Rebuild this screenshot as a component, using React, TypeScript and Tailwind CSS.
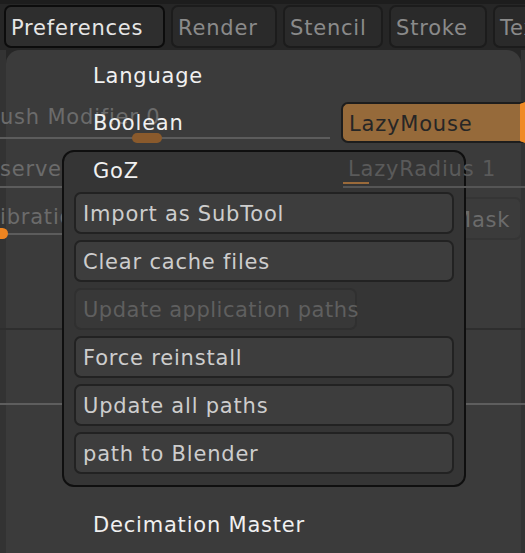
import React from 'react';

const tabs = [
  { label: 'Preferences', w: 'w-[161px]', active: true },
  { label: 'Render', w: 'w-[106px]' },
  { label: 'Stencil', w: 'w-[100px]' },
  { label: 'Stroke', w: 'w-[98px]' },
  { label: 'Texture', w: 'w-[110px]' },
];

const gozItems = [
  { label: 'Import as SubTool' },
  { label: 'Clear cache files' },
  { label: 'Update application paths', disabled: true },
  { label: 'Force reinstall' },
  { label: 'Update all paths' },
  { label: 'path to Blender' },
];

export default function App() {
  return (
    <div className="w-[525px] h-[553px] overflow-hidden bg-[#262626] font-['DejaVu_Sans',sans-serif] text-[21px] leading-[24px] tracking-[0.8px] select-none">
      {/* Tab bar */}
      <div className="h-[50px] flex gap-[6px] pl-[4px] pt-[1px] border-t-[4px] border-[#1d1d1d]">
        {tabs.map((t) => (
          <div
            key={t.label}
            className={
              t.active
                ? `${t.w} shrink-0 h-[43px] rounded-[7px] border-2 border-[#0c0c0c] bg-[#2e2e2e] text-[#e6e6e6] px-[5px] pt-[3px] flex items-center overflow-hidden`
                : `${t.w} shrink-0 h-[43px] rounded-[7px] border-2 border-[#1c1c1c] bg-[#2a2a2a] text-[#8a8a8a] px-[5px] pt-[3px] flex items-center overflow-hidden`
            }
          >
            {t.label}
          </div>
        ))}
      </div>

      {/* Main area */}
      <div className="relative h-[503px] flex">
        <div className="w-[6px] bg-[#333333]" />
        <div className="flex-1 bg-[#3b3b3b] rounded-t-[14px]" />
        <div className="w-[4px] bg-[#333333]" />

        {/* Faded palette underneath */}
        <div className="absolute inset-0 flex flex-col text-[#6b6b6b] whitespace-nowrap">
          {/* Brush Modifier / LazyMouse */}
          <div className="mt-[52px] h-[41px] flex">
            <div className="relative w-[330px]">
              <div className="h-[37px] pt-[3px] border-b-2 border-[#5c5c5c]">ush Modifier 0</div>
              <div className="absolute left-[132px] top-[31px] w-[30px] h-[10px] rounded-full bg-[#8a5a2c]" />
            </div>
            <div className="ml-[11px] flex-1 rounded-l-[7px] border-2 border-r-[5px] border-[#1d1d1d] border-r-[#f08a26] bg-[#966a3a] text-[#262626] pl-[6px] pt-[2px] flex items-center">
              LazyMouse
            </div>
          </div>

          {/* Preserve Edge / LazyRadius */}
          <div className="h-[47px] flex">
            <div className="w-[330px] h-[45px] pt-[14px] border-b-2 border-[#5c5c5c]">serve Edge 1</div>
            <div className="relative z-20 ml-[13px] flex-1 h-[45px] pt-[14px] pl-[5px] border-b-2 border-[#555555] text-[#5a5a5a]">
              LazyRadius 1
              <div className="absolute left-0 bottom-[2px] w-[26px] h-[2px] bg-[#9a6a3a]" />
            </div>
          </div>

          {/* Calibration / Mask */}
          <div className="mt-[7px] h-[43px] flex">
            <div className="relative w-[330px]">
              <div className="h-[38px] pt-[8px] border-b-2 border-[#5c5c5c]">ibration</div>
              <div className="absolute left-0 top-[31px] w-[8px] h-[11px] rounded-r-full bg-[#ee8420]" />
            </div>
            <div className="ml-[119px] w-[73px] rounded-[7px] border-2 border-[#353535] pl-[2px] pt-[3px] flex items-center">
              Mask
            </div>
          </div>

          <div className="mt-[88px] h-[2px] bg-[#2e2e2e]" />
          <div className="mt-[73px] h-[2px] bg-[#5e5e5e]" />
        </div>

        {/* Preferences menu */}
        <div className="absolute inset-0 z-10 flex flex-col text-[#f0f0f0] whitespace-nowrap">
          <div className="h-[48px] pl-[93px] pt-[3px] flex items-center">Language</div>
          <div className="h-[48px] pl-[93px] pt-[2px] flex items-center">Boolean</div>

          <div className="mt-[4px] ml-[62px] w-[404px] h-[337px] rounded-[12px] border-2 border-[#0f0f0f] bg-[#353535] flex flex-col">
            <div className="h-[36px] pl-[29px] pt-[2px] flex items-center">GoZ</div>
            <div className="mt-[4px] pl-[10px] flex flex-col gap-[6px]">
              {gozItems.map((b) => (
                <div
                  key={b.label}
                  className={
                    b.disabled
                      ? 'w-[283px] h-[42px] rounded-[7px] border-2 border-[#303030] bg-[#383838] text-[#5f5f5f] tracking-[0.5px] px-[7px] pt-[1px] flex items-center'
                      : 'w-[380px] h-[42px] rounded-[7px] border-2 border-[#222222] bg-[#3d3d3d] text-[#cdcdcd] px-[7px] pt-[1px] flex items-center'
                  }
                >
                  {b.label}
                </div>
              ))}
            </div>
          </div>

          <div className="mt-[13px] h-[48px] pl-[93px] pt-[1px] flex items-center">Decimation Master</div>
        </div>
      </div>
    </div>
  );
}
